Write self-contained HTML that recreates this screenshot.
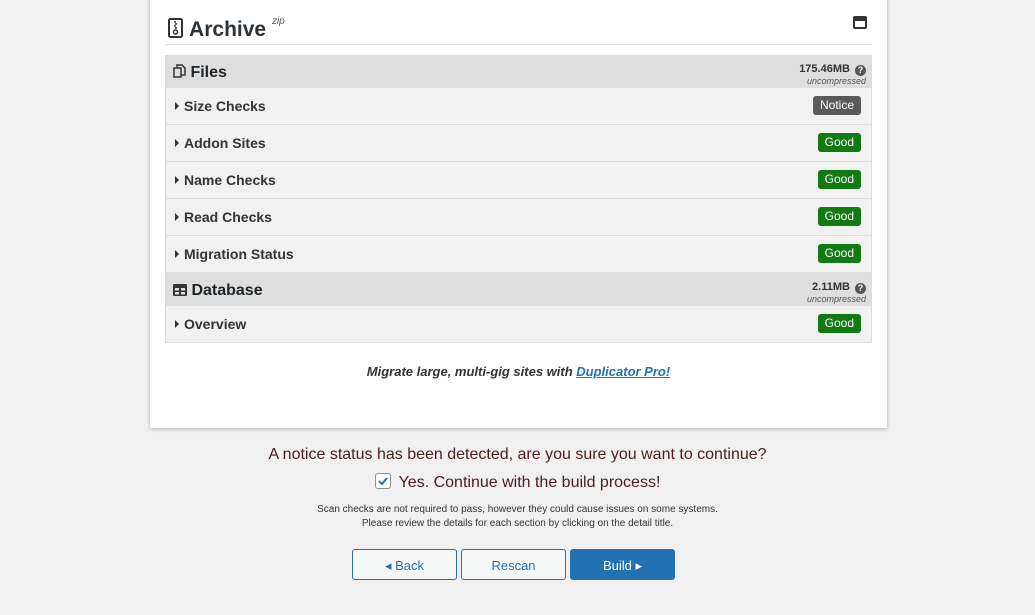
<!DOCTYPE html>
<html><head><style>
body{margin:0;width:1035px;height:615px;background:#f0f0f1;font-family:"Liberation Sans",sans-serif;color:#1d2327;position:relative;overflow:hidden}
.card{position:absolute;left:150px;top:-5px;width:737px;height:433px;background:#fff;box-shadow:0 1px 4px rgba(0,0,0,.25);}
.h{position:absolute;left:18px;top:23px;font-size:21px;font-weight:bold;color:#2c3338}
.h sup{font-size:10px;font-weight:normal;font-style:italic;color:#555;position:relative;top:-4px}
.hr{position:absolute;left:15px;right:15px;top:49px;border-top:1px solid #ddd}
.tbl{position:absolute;left:15px;top:60px;width:705px;border:1px solid #ddd;border-top:none}
.sec{background:#dedede;height:33px;position:relative;font-weight:bold;font-size:16px}
.sec .t{position:absolute;left:7px;top:9px}
.sec .s{position:absolute;right:5px;top:9px;text-align:right;font-size:11px;font-weight:bold;color:#333;line-height:11px}
.sec .s i{font-weight:normal;font-size:9px;color:#555}
.q{display:inline-block;width:11px;height:11px;border-radius:50%;background:#555;color:#fff;font-size:9px;text-align:center;line-height:11px;vertical-align:-1px;margin-left:2px}
.row{background:#f1f1f1;height:36px;border-bottom:1px solid #ddd;position:relative;font-size:14px;font-weight:bold;color:#333}
.row:last-child{border-bottom:none}
.row .t{position:absolute;left:9px;top:10px}
.row .t:before{content:"";display:inline-block;border-left:4px solid #333;border-top:4px solid transparent;border-bottom:4px solid transparent;margin-right:5px;vertical-align:1px}
.b{position:absolute;right:10px;top:8px;height:19px;line-height:19px;padding:0 7px;border-radius:3px;color:#fff;font-size:12px;font-weight:normal;background:#127a12}
.b.n{background:#5a5a5a}
.promo{position:absolute;left:0;right:0;top:369px;text-align:center;font-size:13px;font-weight:bold;font-style:italic;color:#333}
.promo a{color:#2271b1}
.c{position:absolute;left:0;width:1035px;text-align:center;color:#4a1e1e}
.btn{position:absolute;top:549px;height:31px;line-height:31px;border:1px solid #2271b1;border-radius:3px;background:#f6f7f7;color:#2271b1;font-size:13px;text-align:center;box-sizing:border-box}
</style></head><body>
<div class="card">
 <div class="h"><svg width="16" height="20" viewBox="0 0 16 20" style="vertical-align:-2px"><rect x="1" y="1" width="13" height="18" rx="1.5" fill="none" stroke="#333" stroke-width="2"/><path d="M7 3v2M8 5v2M7 7v2M8 9v2" stroke="#333" stroke-width="1.5"/><circle cx="7.5" cy="14" r="2" fill="none" stroke="#333" stroke-width="1.5"/></svg> Archive <sup>zip</sup></div>
 <svg style="position:absolute;right:20px;top:21px" width="14" height="13" viewBox="0 0 14 13"><rect x="0" y="0" width="14" height="13" rx="2" fill="#333"/><rect x="2" y="5" width="10" height="6" fill="#fff"/></svg>
 <div class="hr"></div>
 <div class="tbl">
  <div class="sec"><span class="t"><svg width="13" height="14" viewBox="0 0 13 14" style="vertical-align:-1px"><rect x="1" y="4" width="7" height="9" fill="none" stroke="#333" stroke-width="1.5"/><path d="M4 4V1h5l3 3v7H8" fill="none" stroke="#333" stroke-width="1.5"/></svg> Files</span><span class="s">175.46MB <span class="q">?</span><br><i>uncompressed</i></span></div>
  <div class="row"><span class="t">Size Checks</span><span class="b n">Notice</span></div>
  <div class="row"><span class="t">Addon Sites</span><span class="b">Good</span></div>
  <div class="row"><span class="t">Name Checks</span><span class="b">Good</span></div>
  <div class="row"><span class="t">Read Checks</span><span class="b">Good</span></div>
  <div class="row"><span class="t">Migration Status</span><span class="b">Good</span></div>
  <div class="sec"><span class="t"><svg width="14" height="12" viewBox="0 0 14 12" style="vertical-align:-1px"><rect x="0" y="0" width="14" height="12" rx="1" fill="#333"/><rect x="2" y="4" width="4" height="2.5" fill="#dedede"/><rect x="8" y="4" width="4" height="2.5" fill="#dedede"/><rect x="2" y="8" width="4" height="2.5" fill="#dedede"/><rect x="8" y="8" width="4" height="2.5" fill="#dedede"/></svg> Database</span><span class="s">2.11MB <span class="q">?</span><br><i>uncompressed</i></span></div>
  <div class="row"><span class="t">Overview</span><span class="b">Good</span></div>
 </div>
 <div class="promo">Migrate large, multi-gig sites with <a><u>Duplicator Pro!</u></a></div>
</div>
<div class="c" style="top:446px;font-size:16px">A notice status has been detected, are you sure you want to continue?</div>
<div class="c" style="top:473px;font-size:16px"><span style="display:inline-block;width:14px;height:14px;border:1px solid #8c8f94;border-radius:3px;background:#fff;vertical-align:-2px;margin-right:8px;position:relative"><svg width="14" height="14" viewBox="0 0 14 14" style="position:absolute;left:0;top:0"><path d="M3 7l3 3 5-6" fill="none" stroke="#2271b1" stroke-width="2"/></svg></span>Yes. Continue with the build process!</div>
<div class="c" style="top:503px;font-size:10px;line-height:14px;color:#333">Scan checks are not required to pass, however they could cause issues on some systems.<br>Please review the details for each section by clicking on the detail title.</div>
<div class="btn" style="left:352px;width:105px">◂ Back</div>
<div class="btn" style="left:461px;width:105px">Rescan</div>
<div class="btn" style="left:570px;width:105px;background:#2271b1;color:#fff">Build ▸</div>
</body></html>
